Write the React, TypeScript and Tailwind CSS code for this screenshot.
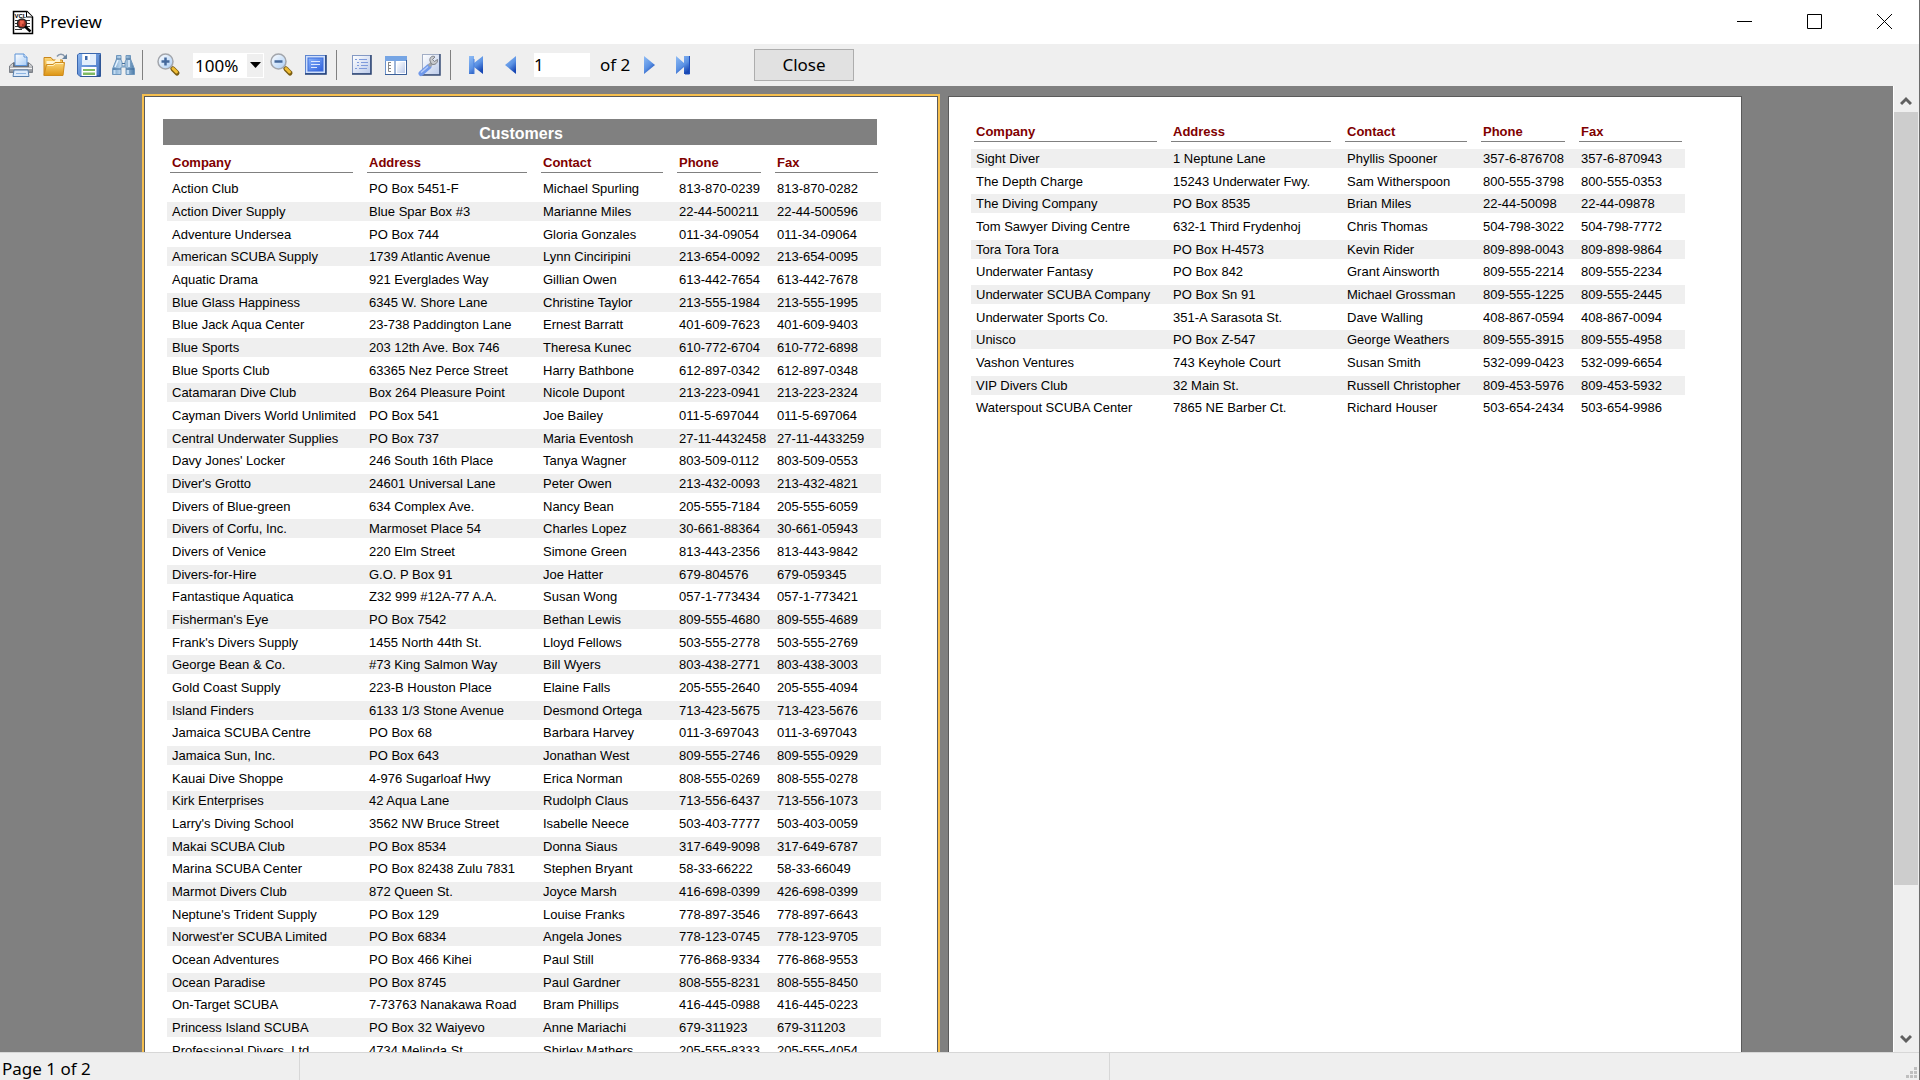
import React, { useState } from "react";

type Customer = [string, string, string, string, string];

const columns = ["Company", "Address", "Contact", "Phone", "Fax"];

const firstPage: Customer[] = [
  ["Action Club", "PO Box 5451-F", "Michael Spurling", "813-870-0239", "813-870-0282"],
  ["Action Diver Supply", "Blue Spar Box #3", "Marianne Miles", "22-44-500211", "22-44-500596"],
  ["Adventure Undersea", "PO Box 744", "Gloria Gonzales", "011-34-09054", "011-34-09064"],
  ["American SCUBA Supply", "1739 Atlantic Avenue", "Lynn Cinciripini", "213-654-0092", "213-654-0095"],
  ["Aquatic Drama", "921 Everglades Way", "Gillian Owen", "613-442-7654", "613-442-7678"],
  ["Blue Glass Happiness", "6345 W. Shore Lane", "Christine Taylor", "213-555-1984", "213-555-1995"],
  ["Blue Jack Aqua Center", "23-738 Paddington Lane", "Ernest Barratt", "401-609-7623", "401-609-9403"],
  ["Blue Sports", "203 12th Ave. Box 746", "Theresa Kunec", "610-772-6704", "610-772-6898"],
  ["Blue Sports Club", "63365 Nez Perce Street", "Harry Bathbone", "612-897-0342", "612-897-0348"],
  ["Catamaran Dive Club", "Box 264 Pleasure Point", "Nicole Dupont", "213-223-0941", "213-223-2324"],
  ["Cayman Divers World Unlimited", "PO Box 541", "Joe Bailey", "011-5-697044", "011-5-697064"],
  ["Central Underwater Supplies", "PO Box 737", "Maria Eventosh", "27-11-4432458", "27-11-4433259"],
  ["Davy Jones' Locker", "246 South 16th Place", "Tanya Wagner", "803-509-0112", "803-509-0553"],
  ["Diver's Grotto", "24601 Universal Lane", "Peter Owen", "213-432-0093", "213-432-4821"],
  ["Divers of Blue-green", "634 Complex Ave.", "Nancy Bean", "205-555-7184", "205-555-6059"],
  ["Divers of Corfu, Inc.", "Marmoset Place 54", "Charles Lopez", "30-661-88364", "30-661-05943"],
  ["Divers of Venice", "220 Elm Street", "Simone Green", "813-443-2356", "813-443-9842"],
  ["Divers-for-Hire", "G.O. P Box 91", "Joe Hatter", "679-804576", "679-059345"],
  ["Fantastique Aquatica", "Z32 999 #12A-77 A.A.", "Susan Wong", "057-1-773434", "057-1-773421"],
  ["Fisherman's Eye", "PO Box 7542", "Bethan Lewis", "809-555-4680", "809-555-4689"],
  ["Frank's Divers Supply", "1455 North 44th St.", "Lloyd Fellows", "503-555-2778", "503-555-2769"],
  ["George Bean & Co.", "#73 King Salmon Way", "Bill Wyers", "803-438-2771", "803-438-3003"],
  ["Gold Coast Supply", "223-B Houston Place", "Elaine Falls", "205-555-2640", "205-555-4094"],
  ["Island Finders", "6133 1/3 Stone Avenue", "Desmond Ortega", "713-423-5675", "713-423-5676"],
  ["Jamaica SCUBA Centre", "PO Box 68", "Barbara Harvey", "011-3-697043", "011-3-697043"],
  ["Jamaica Sun, Inc.", "PO Box 643", "Jonathan West", "809-555-2746", "809-555-0929"],
  ["Kauai Dive Shoppe", "4-976 Sugarloaf Hwy", "Erica Norman", "808-555-0269", "808-555-0278"],
  ["Kirk Enterprises", "42 Aqua Lane", "Rudolph Claus", "713-556-6437", "713-556-1073"],
  ["Larry's Diving School", "3562 NW Bruce Street", "Isabelle Neece", "503-403-7777", "503-403-0059"],
  ["Makai SCUBA Club", "PO Box 8534", "Donna Siaus", "317-649-9098", "317-649-6787"],
  ["Marina SCUBA Center", "PO Box 82438 Zulu 7831", "Stephen Bryant", "58-33-66222", "58-33-66049"],
  ["Marmot Divers Club", "872 Queen St.", "Joyce Marsh", "416-698-0399", "426-698-0399"],
  ["Neptune's Trident Supply", "PO Box 129", "Louise Franks", "778-897-3546", "778-897-6643"],
  ["Norwest'er SCUBA Limited", "PO Box 6834", "Angela Jones", "778-123-0745", "778-123-9705"],
  ["Ocean Adventures", "PO Box 466 Kihei", "Paul Still", "776-868-9334", "776-868-9553"],
  ["Ocean Paradise", "PO Box 8745", "Paul Gardner", "808-555-8231", "808-555-8450"],
  ["On-Target SCUBA", "7-73763 Nanakawa Road", "Bram Phillips", "416-445-0988", "416-445-0223"],
  ["Princess Island SCUBA", "PO Box 32 Waiyevo", "Anne Mariachi", "679-311923", "679-311203"],
  ["Professional Divers, Ltd.", "4734 Melinda St.", "Shirley Mathers", "205-555-8333", "205-555-4054"],
];

const secondPage: Customer[] = [
  ["Sight Diver", "1 Neptune Lane", "Phyllis Spooner", "357-6-876708", "357-6-870943"],
  ["The Depth Charge", "15243 Underwater Fwy.", "Sam Witherspoon", "800-555-3798", "800-555-0353"],
  ["The Diving Company", "PO Box 8535", "Brian Miles", "22-44-50098", "22-44-09878"],
  ["Tom Sawyer Diving Centre", "632-1 Third Frydenhoj", "Chris Thomas", "504-798-3022", "504-798-7772"],
  ["Tora Tora Tora", "PO Box H-4573", "Kevin Rider", "809-898-0043", "809-898-9864"],
  ["Underwater Fantasy", "PO Box 842", "Grant Ainsworth", "809-555-2214", "809-555-2234"],
  ["Underwater SCUBA Company", "PO Box Sn 91", "Michael Grossman", "809-555-1225", "809-555-2445"],
  ["Underwater Sports Co.", "351-A Sarasota St.", "Dave Walling", "408-867-0594", "408-867-0094"],
  ["Unisco", "PO Box Z-547", "George Weathers", "809-555-3915", "809-555-4958"],
  ["Vashon Ventures", "743 Keyhole Court", "Susan Smith", "532-099-0423", "532-099-6654"],
  ["VIP Divers Club", "32 Main St.", "Russell Christopher", "809-453-5976", "809-453-5932"],
  ["Waterspout SCUBA Center", "7865 NE Barber Ct.", "Richard Houser", "503-654-2434", "503-654-9986"],
];

function ReportTable({
  rows,
  startIndex,
}: {
  rows: Customer[];
  startIndex: number;
}) {
  return (
    <table className="w-[714px] table-fixed border-collapse text-[13px] leading-[19px] text-black">
      <colgroup>
        <col className="w-[197px]" />
        <col className="w-[174px]" />
        <col className="w-[136px]" />
        <col className="w-[98px]" />
        <col className="w-[109px]" />
      </colgroup>
      <thead>
        <tr>
          {columns.map((name) => (
            <th
              key={name}
              scope="col"
              className={`p-0 pl-[3px] pr-[11px] text-left font-bold text-[#800000] last:pr-[3px] ${
                startIndex > 0 ? "pb-[7px]" : "pb-[6px]"
              }`}
            >
              <div className="border-b border-[#808080] pl-[2px] pt-2">{name}</div>
            </th>
          ))}
        </tr>
      </thead>
      <tbody>
        {rows.map((row, i) => {
          const n = startIndex + i;
          return (
            <tr key={row[0]}>
              {row.map((cell, c) => (
                <td key={c} className={n % 3 === 2 ? "p-0 pb-[3px]" : "p-0 pb-1"}>
                  <div
                    className={`whitespace-nowrap pl-[5px] ${
                      n % 2 === 1 ? "bg-[#efefef]" : ""
                    }`}
                  >
                    {cell}
                  </div>
                </td>
              ))}
            </tr>
          );
        })}
      </tbody>
    </table>
  );
}

function Gradients() {
  return (
    <svg width="0" height="0" className="absolute" aria-hidden="true">
      <defs>
        <linearGradient id="arrowBlue" x1="0" y1="0" x2="0.6" y2="1">
          <stop offset="0" stopColor="#8fbcf5" />
          <stop offset="0.6" stopColor="#5b92e4" />
          <stop offset="1" stopColor="#1747b4" />
        </linearGradient>
        <linearGradient id="folder" x1="0" y1="0" x2="0" y2="1">
          <stop offset="0" stopColor="#fbd678" />
          <stop offset="1" stopColor="#dc9412" />
        </linearGradient>
        <linearGradient id="disk" x1="0" y1="0" x2="1" y2="1">
          <stop offset="0" stopColor="#8db8f0" />
          <stop offset="1" stopColor="#3f6fc0" />
        </linearGradient>
        <linearGradient id="paper" x1="0" y1="0" x2="1" y2="1">
          <stop offset="0" stopColor="#ffffff" />
          <stop offset="1" stopColor="#bccbea" />
        </linearGradient>
        <linearGradient id="glass" x1="0" y1="0" x2="1" y2="1">
          <stop offset="0" stopColor="#ffffff" />
          <stop offset="1" stopColor="#a9cdf6" />
        </linearGradient>
        <linearGradient id="metal" x1="0" y1="0" x2="0" y2="1">
          <stop offset="0" stopColor="#e4e4e4" />
          <stop offset="1" stopColor="#858a92" />
        </linearGradient>
        <linearGradient id="barrel" x1="0" y1="0" x2="1" y2="0">
          <stop offset="0" stopColor="#6f9cc6" />
          <stop offset="0.45" stopColor="#cde3f6" />
          <stop offset="1" stopColor="#4a7aa8" />
        </linearGradient>
        <linearGradient id="screen" x1="0" y1="0" x2="1" y2="1">
          <stop offset="0" stopColor="#8ab4fb" />
          <stop offset="1" stopColor="#2c5fdc" />
        </linearGradient>
      </defs>
    </svg>
  );
}

function AppIcon() {
  return (
    <svg width="22" height="25" viewBox="0 0 22 25">
      <path d="M1.5 1.5H15L20.5 7V23.5H1.5Z" fill="#fff" stroke="#000" strokeWidth="1.5" />
      <path d="M14.5 1.5V7H20.5" fill="#fff" stroke="#000" />
      <text x="2.5" y="8" fontSize="6" fontWeight="bold" fontFamily="Liberation Sans, sans-serif">
        VCL
      </text>
      <path d="M3 10.5H18M3 13.5H18M3 16.5H18M3 19.5H10" stroke="#333" />
      <circle cx="10" cy="13.5" r="4.5" fill="#a9372a" stroke="#222" strokeWidth="1.5" />
      <path d="M8 11.5H11V13H9V16" stroke="#f0664e" strokeWidth="1.5" fill="none" />
      <path d="M13 16.5L18.5 21.5" stroke="#000" strokeWidth="2.5" />
    </svg>
  );
}

function PrintIcon() {
  return (
    <svg width="24" height="24" viewBox="0 0 24 24">
      <path d="M4 10H20L23.5 13V19.5H.5V13Z" fill="url(#metal)" stroke="#7d8188" />
      <path d="M4 9.500H20V14H4Z" fill="#6b7078" />
      <path d="M6 1H15L18 4V12.500H6Z" fill="url(#glass)" stroke="#5b92d6" />
      <path d="M15 1V4H18" fill="#fff" stroke="#5b92d6" />
      <path d="M1 15.5H23" stroke="#f4f4f4" />
      <path d="M5 17H19L20 23.5H4Z" fill="#dceafa" stroke="#567fae" />
      <path d="M7 20.5H17" stroke="#8db5e2" />
    </svg>
  );
}

function OpenIcon() {
  return (
    <svg width="24" height="24" viewBox="0 0 24 24">
      <path d="M1 4.5H8L10 7H19.500V22.500H1Z" fill="url(#folder)" stroke="#c9851a" />
      <path d="M3.500 8H11.500L13 6H17V11H3.500Z" fill="#fff3cf" />
      <path d="M1 22.500L3.500 11.500H10L12 9.500H21.500L20 22.500Z" fill="url(#folder)" stroke="#cf8b1c" />
      <path d="M4.500 12.500H10.500L12.500 10.500H20" stroke="#fff0c0" fill="none" />
      <path d="M14 3.500C16 .5 20 .5 22 4" stroke="#8797ab" strokeWidth="1.500" fill="none" />
      <path d="M24 1V6H19Z" fill="#6884a0" />
    </svg>
  );
}

function SaveIcon() {
  return (
    <svg width="24" height="24" viewBox="0 0 24 24">
      <path d="M2 .5H23.500V23.500H3L.5 21V2Z" fill="url(#disk)" stroke="#3a67ae" />
      <path d="M23 2V23H4" stroke="#24467f" fill="none" />
      <path d="M5 1H19V12H5Z" fill="#e2eefc" />
      <path d="M6 1H13V7H6Z" fill="#fff" />
      <path d="M8 3H10.500V7H8Z" fill="#3c68ab" />
      <path d="M4.500 14H19.500V23H4.500Z" fill="#fff" />
      <path d="M6 16H18V18H6ZM6 19.500H18V22H6Z" fill="#7fba62" />
    </svg>
  );
}

function FindIcon() {
  return (
    <svg width="24" height="24" viewBox="0 0 24 24">
      <path d="M5.500 2.500H10V7L11 9V13H14V9L15 7V2.500H19.500V6L23.500 16V21.500H15V14H10V21.500H1.500V16L5.500 6Z" fill="url(#barrel)" stroke="#6f97bd" />
      <path d="M2 16H10M15 16H23" stroke="#3d6b9a" />
      <path d="M5.500 6H10M15 6H19.500M11 10.500H14" stroke="#45719d" />
      <path d="M4 14L7 7M18 14V7" stroke="#e4f2ff" strokeWidth="1.500" />
      <path d="M3.500 17V21M17 17V21" stroke="#c3dcf2" strokeWidth="2" />
    </svg>
  );
}

function ZoomIcon({ plus }: { plus?: boolean }) {
  return (
    <svg width="24" height="24" viewBox="0 0 24 24">
      <path d="M14 14L17 17" stroke="#777" strokeWidth="3" />
      <path d="M16 16L20 20" stroke="#7a5c10" strokeWidth="5" strokeLinecap="round" />
      <path d="M16 15.500L19.500 19" stroke="#f0bd35" strokeWidth="3" strokeLinecap="round" />
      <circle cx="8.500" cy="8.500" r="7.500" fill="url(#glass)" stroke="#a3a6ac" strokeWidth="1.500" />
      <path d="M4.500 8.500H12.500" stroke="#44699c" strokeWidth="2.500" />
      {plus && <path d="M8.500 4.500V12.500" stroke="#44699c" strokeWidth="2.500" />}
    </svg>
  );
}

function FullScreenIcon() {
  return (
    <svg width="24" height="24" viewBox="0 0 24 24">
      <rect x="1.500" y="2.500" width="20" height="18" fill="#cfdffb" stroke="#5f86cf" />
      <path d="M22 2V21H1" stroke="#213f78" strokeWidth="1.500" fill="none" />
      <rect x="4" y="5" width="15" height="13" fill="url(#screen)" stroke="#3e6fdc" />
      <path d="M7 8.500H16M7 11.500H16M7 14.500H13" stroke="#dbe8ff" />
    </svg>
  );
}

function OutlineIcon() {
  return (
    <svg width="24" height="24" viewBox="0 0 24 24">
      <rect x="2.500" y="2.500" width="18" height="18" fill="url(#paper)" stroke="#8499c4" />
      <path d="M21 2V21H2" stroke="#2b4370" strokeWidth="1.500" fill="none" />
      <path d="M5 6.500H7M9 6.500H17M7 9.500H9M11 9.500H18M7 12.500H9M11 12.500H18M5 15.500H7M9 15.500H17" stroke="#7f9bdb" />
    </svg>
  );
}

function ThumbnailsIcon() {
  return (
    <svg width="24" height="24" viewBox="0 0 24 24">
      <rect x="1.500" y="3.500" width="21" height="18" fill="#fff" stroke="#6b93cd" />
      <rect x="1" y="3" width="22" height="5" fill="#76a5e4" />
      <path d="M22.500 7V21.500H1" stroke="#3b5f97" fill="none" />
      <path d="M11 8V21" stroke="#9eb5d8" strokeWidth="2" />
      <path d="M13 9H21V20H13Z" fill="url(#paper)" />
      <path d="M4.500 9V18.500H7M4.500 12.500H7M4.500 15.500H7M4.500 9.500H7" stroke="#888" fill="none" />
    </svg>
  );
}

function SettingsIcon() {
  return (
    <svg width="24" height="24" viewBox="0 0 24 24">
      <rect x="4.500" y="1.500" width="17" height="20" fill="url(#paper)" stroke="#a2aec6" />
      <path d="M22 1V22H4" stroke="#3a4f78" fill="none" strokeWidth="1.500" />
      <path d="M3 20.500L11 13.500" stroke="#6f98ea" strokeWidth="5" strokeLinecap="round" />
      <path d="M3 19.500L10 13.500" stroke="#b6ccf8" strokeWidth="1.500" />
      <path d="M11 13L14 10" stroke="#a3a5a8" strokeWidth="3.500" />
      <path d="M12 8C11 4 15 2 17 4L14.500 6.500L16.500 8.500L19.500 6.500C20 10 17 12.500 13.500 11Z" fill="#c9cbce" stroke="#7d8087" />
    </svg>
  );
}

const navShapes = {
  first: "M1 3H6V10L15 3V21L6 14V21H1Z",
  prev: "M12 3V21L1 12Z",
  next: "M1 3V21L12 12Z",
  last: "M1 3V21L9 14V21H15V3H9V10Z",
};

function NavIcon({ kind }: { kind: keyof typeof navShapes }) {
  return (
    <svg width="16" height="24" viewBox="0 0 16 24">
      <path d={navShapes[kind]} fill="url(#arrowBlue)" />
      {kind === "first" && <path d="M6 6V21" stroke="#4a80dc" />}
      {kind === "last" && <path d="M14.500 3V21H10" stroke="#1e4fbb" fill="none" />}
    </svg>
  );
}

function ToolButton({
  label,
  onClick,
  children,
}: {
  label: string;
  onClick?: () => void;
  children: React.ReactNode;
}) {
  return (
    <button type="button" aria-label={label} title={label} onClick={onClick}>
      {children}
    </button>
  );
}

function Separator() {
  return <div className="h-[30px] w-px bg-[#808080]" />;
}

function Toolbar({
  page,
  setPage,
}: {
  page: string;
  setPage: (value: string) => void;
}) {
  const [zoom, setZoom] = useState("100%");

  return (
    <div className="flex h-[42px] shrink-0 items-center bg-[#efefef] pl-[9px] text-[17px]">
      <div className="flex items-center gap-[10px]">
        <ToolButton label="Print">
          <PrintIcon />
        </ToolButton>
        <ToolButton label="Open">
          <OpenIcon />
        </ToolButton>
        <ToolButton label="Save">
          <SaveIcon />
        </ToolButton>
        <ToolButton label="Find">
          <FindIcon />
        </ToolButton>
      </div>
      <div className="ml-[7px] flex items-center">
        <Separator />
        <div className="ml-[14px] flex items-center">
          <ToolButton label="Zoom in">
            <ZoomIcon plus />
          </ToolButton>
        </div>
        <div className="relative ml-3 h-[25px] w-[71px] bg-white">
          <select
            aria-label="Zoom"
            value={zoom}
            onChange={(e) => setZoom(e.target.value)}
            className="h-full w-full appearance-none bg-white pl-[2px] outline-none"
          >
            <option>50%</option>
            <option>100%</option>
            <option>200%</option>
          </select>
          <div className="pointer-events-none absolute inset-y-px right-px flex w-4 items-center justify-center bg-[#efefef]">
            <svg width="11" height="6" viewBox="0 0 11 6">
              <path d="M0 0H11L5.500 6Z" />
            </svg>
          </div>
        </div>
        <div className="ml-[6px] flex items-center gap-[10px]">
          <ToolButton label="Zoom out">
            <ZoomIcon />
          </ToolButton>
          <ToolButton label="Full screen">
            <FullScreenIcon />
          </ToolButton>
        </div>
      </div>
      <div className="ml-2 flex items-center">
        <Separator />
        <div className="ml-[13px] flex items-center gap-[10px]">
          <ToolButton label="Outline">
            <OutlineIcon />
          </ToolButton>
          <ToolButton label="Thumbnails">
            <ThumbnailsIcon />
          </ToolButton>
          <ToolButton label="Page settings">
            <SettingsIcon />
          </ToolButton>
        </div>
      </div>
      <div className="ml-2 flex items-center">
        <Separator />
        <div className="ml-[17px] flex items-center gap-5">
          <ToolButton label="First page" onClick={() => setPage("1")}>
            <NavIcon kind="first" />
          </ToolButton>
          <ToolButton label="Previous page" onClick={() => setPage("1")}>
            <NavIcon kind="prev" />
          </ToolButton>
        </div>
        <input
          type="text"
          aria-label="Page number"
          value={page}
          onChange={(e) => setPage(e.target.value)}
          className="ml-[14px] h-6 w-14 bg-white outline-none"
        />
        <span className="ml-[10px] w-[34px] whitespace-nowrap">of 2</span>
        <div className="ml-[9px] flex items-center gap-4">
          <ToolButton label="Next page" onClick={() => setPage("2")}>
            <NavIcon kind="next" />
          </ToolButton>
          <ToolButton label="Last page" onClick={() => setPage("2")}>
            <NavIcon kind="last" />
          </ToolButton>
        </div>
      </div>
      <button
        type="button"
        className="ml-[63px] h-8 w-[100px] border border-[#adadad] bg-[#e1e1e1]"
      >
        Close
      </button>
    </div>
  );
}

function TitleBar() {
  return (
    <header className="flex h-11 shrink-0 items-center bg-white pl-3 pr-[26px]">
      <AppIcon />
      <h1 className="ml-[6px] flex-1 text-[17px]">Preview</h1>
      <div className="flex items-center gap-[54px]">
        <button type="button" aria-label="Minimize">
          <svg width="16" height="16" viewBox="0 0 16 16">
            <path d="M0 7.500H15" stroke="#000" />
          </svg>
        </button>
        <button type="button" aria-label="Maximize">
          <svg width="16" height="16" viewBox="0 0 16 16">
            <path d="M.5 .5H14.500V14.500H.5Z" stroke="#000" fill="none" />
          </svg>
        </button>
        <button type="button" aria-label="Close window">
          <svg width="16" height="16" viewBox="0 0 16 16">
            <path d="M0 0L15 15M15 0L0 15" stroke="#000" />
          </svg>
        </button>
      </div>
    </header>
  );
}

function ScrollBar() {
  return (
    <div className="flex w-[26px] shrink-0 flex-col border-l border-white bg-[#efefef] pr-px">
      <button
        type="button"
        aria-label="Scroll up"
        className="flex h-[26px] items-center justify-center pt-1"
      >
        <svg width="12" height="10" viewBox="0 0 12 10">
          <path d="M1 8L6 3L11 8" stroke="#606060" strokeWidth="3" fill="none" />
        </svg>
      </button>
      <div className="flex-1">
        <div className="h-11/13 bg-[#cdcdcd]" />
      </div>
      <button
        type="button"
        aria-label="Scroll down"
        className="flex h-[26px] items-center justify-center"
      >
        <svg width="12" height="10" viewBox="0 0 12 10">
          <path d="M1 2L6 7L11 2" stroke="#606060" strokeWidth="3" fill="none" />
        </svg>
      </button>
    </div>
  );
}

export default function App() {
  const [page, setPage] = useState("1");

  return (
    <div className="flex h-screen flex-col overflow-hidden border-r border-[#6b6b6b] bg-[#efefef] font-['Noto_Sans',sans-serif] text-black">
      <Gradients />
      <TitleBar />
      <Toolbar page={page} setPage={setPage} />

      <div className="flex min-h-0 flex-1">
        <main className="flex flex-1 items-start justify-center gap-[10px] overflow-hidden bg-[#808080] pr-[7px] pt-[10px] font-['Liberation_Sans',Arial,sans-serif]">
          <section
            className={`h-[1123px] w-[794px] shrink-0 border border-[#5a5a5a] bg-white pt-[22px] ${
              page !== "2" ? "ring-2 ring-[#f5bf4f]" : ""
            }`}
          >
            <h2 className="ml-[18px] h-[26px] w-[714px] bg-[#808080] pl-[2px] text-center text-base leading-[29px] font-bold text-white">
              Customers
            </h2>
            <div className="pl-[22px]">
              <ReportTable rows={firstPage} startIndex={0} />
            </div>
          </section>
          <section
            className={`h-[1123px] w-[794px] shrink-0 border border-[#5a5a5a] bg-white pl-[22px] pt-[17px] ${
              page === "2" ? "ring-2 ring-[#f5bf4f]" : ""
            }`}
          >
            <ReportTable rows={secondPage} startIndex={43} />
          </section>
        </main>
        <ScrollBar />
      </div>

      <footer className="flex h-7 shrink-0 border-t border-[#d7d7d7] bg-[#efefef] text-[17px] leading-[31px]">
        <div className="w-[300px] border-r border-[#d7d7d7] pl-[2px]">Page {page} of 2</div>
        <div className="w-[810px] border-r border-[#d7d7d7]" />
        <div className="flex flex-1 items-end justify-end p-px">
          <svg width="12" height="12" viewBox="0 0 12 12" fill="#bfbfbf">
            <path d="M8 0h3v3h-3zM4 4h3v3h-3zM8 4h3v3h-3zM0 8h3v3h-3zM4 8h3v3h-3zM8 8h3v3h-3z" />
          </svg>
        </div>
      </footer>
    </div>
  );
}
